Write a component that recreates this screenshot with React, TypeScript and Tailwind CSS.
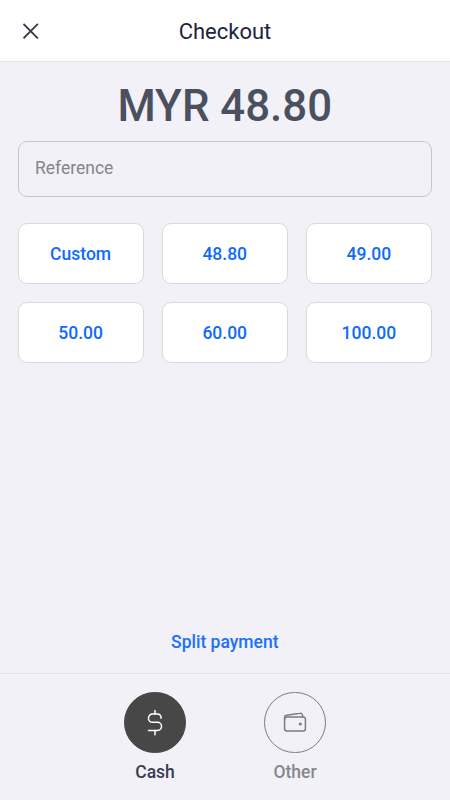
import { useState } from 'react'

const AMOUNTS = ['Custom', '48.80', '49.00', '50.00', '60.00', '100.00']

function CloseIcon() {
  return (
    <svg width="16" height="16" viewBox="0 0 16 16" fill="none" stroke="#333a4c" strokeWidth="1.8">
      <path d="M0.5 0.9 14.9 15.3M14.9 0.9 0.5 15.3" />
    </svg>
  )
}

function DollarIcon() {
  return (
    <svg width="16" height="28" viewBox="0 0 16 28" fill="none" stroke="currentColor" strokeWidth="1.5" strokeLinecap="round" strokeLinejoin="round">
      <path d="M14 9.2V8.4A3.3 3.3 0 0 0 10.7 5.1H5.4A3.9 3.9 0 0 0 1.5 9v.4a3.9 3.9 0 0 0 3.9 3.9h5.2a3.9 3.9 0 0 1 3.9 3.9v.3a3.9 3.9 0 0 1-3.9 3.9H1.5" />
      <path d="M8 1.5v3.6M8 21.4v4.4" />
    </svg>
  )
}

function WalletIcon() {
  return (
    <svg width="24" height="22" viewBox="0 0 24 22" fill="none" stroke="currentColor" strokeWidth="1.5" strokeLinecap="round" strokeLinejoin="round">
      <rect x="1.6" y="4.9" width="20.8" height="14" rx="2.2" />
      <path d="M1.6 7.5V5.2c0-1.1.8-1.9 1.9-2L17 1.2c1.1-.2 2 .4 2.3 1.4l.6 2.3" />
      <circle cx="17.3" cy="12" r="1.6" fill="currentColor" stroke="none" />
    </svg>
  )
}

export default function App() {
  const [method, setMethod] = useState('cash')
  const [reference, setReference] = useState('')

  return (
    <div className="flex h-[800px] w-[450px] flex-col bg-[#f2f1f7] font-[Roboto,sans-serif]">
      <header className="grid h-[62px] shrink-0 grid-cols-[61px_1fr_61px] items-center border-b border-[#e6e6ea] bg-white pt-0.5">
        <button className="flex justify-center pb-[2px]" aria-label="Close">
          <CloseIcon />
        </button>
        <h1 className="text-center text-[22px] leading-7 text-[#1c2440]">Checkout</h1>
      </header>

      <main className="flex flex-1 flex-col pr-[18px] pl-[17.5px]">
        <p className="mt-[18px] text-center text-[43.8px] leading-[52px] font-medium text-[#4b505f]">MYR 48.80</p>
        <input
          value={reference}
          onChange={(e) => setReference(e.target.value)}
          placeholder="Reference"
          className="mt-[9px] h-14 w-full shrink-0 rounded-[9px] border border-[#c6c6cb] px-[16.5px] pb-0.5 text-[17.5px] outline-none placeholder:text-[#858589]"
        />
        <div className="mt-[26px] grid grid-cols-3 gap-x-[18px] gap-y-[18px]">
          {AMOUNTS.map((amount) => (
            <button key={amount} className="h-[61px] rounded-[9px] border border-[#d9d9dc] bg-white pt-0.5 text-[17.5px] font-medium text-[#0f6bfb]">
              {amount}
            </button>
          ))}
        </div>
        <button className="mt-auto mb-[19px] self-center text-[17.5px] leading-6 font-medium text-[#1a70fb]">Split payment</button>
      </main>

      <footer className="flex h-[127px] shrink-0 justify-center gap-[78px] border-t border-[#e3e3e8] pt-[18px]">
        <button onClick={() => setMethod('cash')} className="flex w-[62px] flex-col items-center">
          <span className={`flex h-[61px] w-[62px] items-center justify-center rounded-full border ${method === 'cash' ? 'border-[#474747] bg-[#474747] text-white' : 'border-[#7c7c80] text-[#7c7c80]'}`}>
            <DollarIcon />
          </span>
          <span className={`mt-[7px] text-[17.5px] leading-6 font-medium ${method === 'cash' ? 'text-[#363d54]' : 'text-[#87878c]'}`}>Cash</span>
        </button>
        <button onClick={() => setMethod('other')} className="flex w-[62px] flex-col items-center">
          <span className={`flex h-[61px] w-[62px] items-center justify-center rounded-full border ${method === 'other' ? 'border-[#474747] bg-[#474747] text-white' : 'border-[#7c7c80] text-[#7c7c80]'}`}>
            <WalletIcon />
          </span>
          <span className={`mt-[7px] text-[17.5px] leading-6 font-medium ${method === 'other' ? 'text-[#363d54]' : 'text-[#87878c]'}`}>Other</span>
        </button>
      </footer>
    </div>
  )
}
